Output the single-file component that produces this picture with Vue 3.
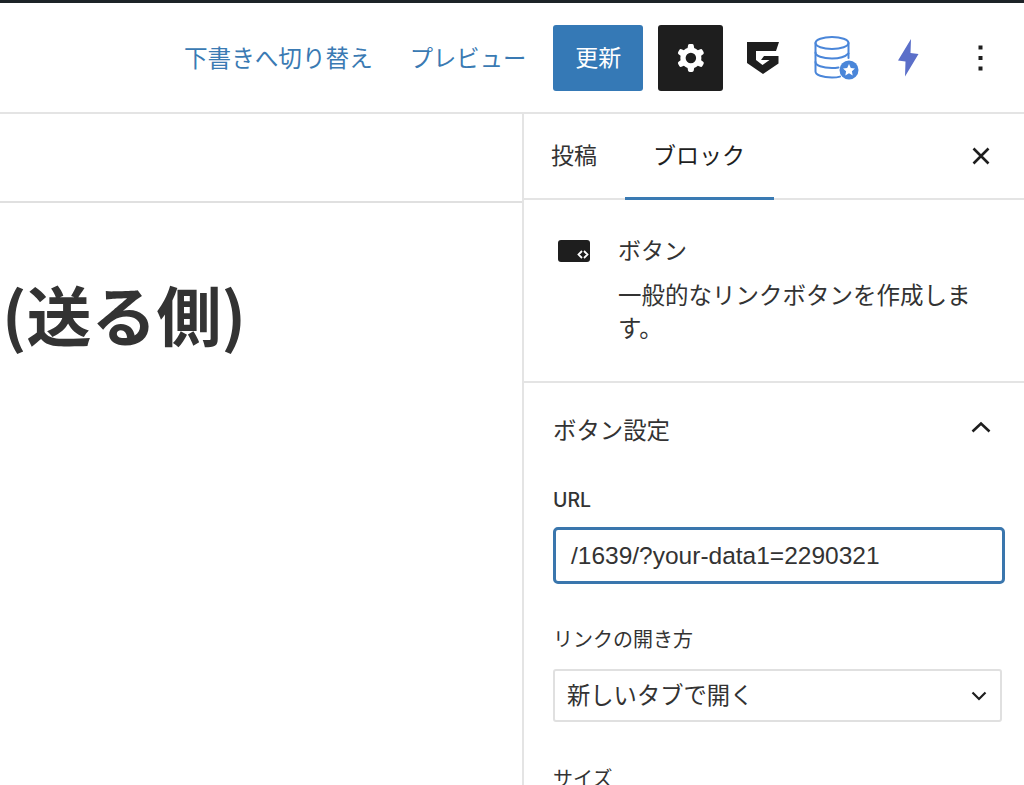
<script setup>
const links = ['下書きへ切り替え', 'プレビュー']
</script>

<template>
  <div class="page">
    <div class="topline"></div>
    <header class="header">
      <a class="link first">{{ links[0] }}</a>
      <a class="link second">{{ links[1] }}</a>
      <button class="update">更新</button>
      <button class="gear" aria-label="設定">
        <svg width="42" height="42" viewBox="0 0 24 24"><path fill="#fff" fill-rule="evenodd" d="M10.289 4.836A1 1 0 0111.275 4h1.306a1 1 0 01.987.836l.244 1.466c.787.26 1.503.679 2.108 1.218l1.393-.522a1 1 0 011.216.437l.653 1.13a1 1 0 01-.23 1.273l-1.148.944a6.025 6.025 0 010 2.435l1.149.946a1 1 0 01.23 1.272l-.653 1.13a1 1 0 01-1.216.437l-1.394-.522c-.605.54-1.32.958-2.108 1.218l-.244 1.466a1 1 0 01-.987.836h-1.306a1 1 0 01-.986-.836l-.244-1.466a5.995 5.995 0 01-2.108-1.218l-1.394.522a1 1 0 01-1.217-.436l-.653-1.131a1 1 0 01.23-1.272l1.149-.946a6.026 6.026 0 010-2.435l-1.148-.944a1 1 0 01-.23-1.272l.653-1.131a1 1 0 011.217-.437l1.393.522a5.994 5.994 0 012.108-1.218l.244-1.466zM14.929 12a3 3 0 11-6 0 3 3 0 016 0z"/></svg>
      </button>
      <svg class="g-icon" width="32" height="32" viewBox="0 0 32 32"><path fill="#1e1e1e" d="M0 0H32L29 9H9V18L15.500 23L22.500 18H14L17 14H31.500V21.500L16 32L0 21Z"/></svg>
      <svg class="db-icon" width="45" height="44" viewBox="0 0 45 44">
        <g fill="none" stroke="#4a86d9" stroke-width="2" stroke-linecap="round">
          <ellipse cx="18" cy="7" rx="16.500" ry="6"/>
          <path d="M1.500 7V35.500C1.500 39 8.500 41.500 18 41.500C21 41.500 24 41.200 26 40.600"/>
          <path d="M34.500 7V22"/>
          <path d="M1.500 16.500C1.500 20 8.500 22.500 18 22.500C24.500 22.500 31 21 34.500 17.500"/>
          <path d="M1.500 26C1.500 29.500 8.500 32 18 32C20.500 32 22.500 31.800 24.500 31.400"/>
        </g>
        <circle cx="35" cy="34" r="9.500" fill="#4a86d9"/>
        <path fill="#fff" d="M35 28L36.800 31.900L41 32.400L37.900 35.200L38.700 39.400L35 37.300L31.300 39.400L32.100 35.200L29 32.400L33.200 31.900Z"/>
      </svg>
      <svg class="bolt" width="22" height="38" viewBox="0 0 22 38"><path fill="#5b6fc9" d="M13 0L0 21.500L7.500 22.500L7 37.500L20.500 15L12.500 14Z"/></svg>
      <svg class="dots" width="6" height="26" viewBox="0 0 6 26"><rect x="0.500" y="0.500" width="4" height="4" fill="#1e1e1e"/><rect x="0.500" y="11" width="4" height="4" fill="#1e1e1e"/><rect x="0.500" y="21.500" width="4" height="4" fill="#1e1e1e"/></svg>
    </header>

    <div class="body">
      <main class="editor">
        <div class="editor-top"></div>
        <h1 class="title">(送る側)</h1>
      </main>

      <aside class="sidebar">
        <div class="tabs">
          <span class="tab tab-post">投稿</span>
          <span class="tab tab-block">ブロック</span>
          <svg class="close" width="20" height="20" viewBox="0 0 20 20"><path d="M2.500 2.500L17.500 17.500M17.500 2.500L2.500 17.500" stroke="#1e1e1e" stroke-width="2.600" fill="none"/></svg>
        </div>

        <section class="card">
          <svg class="block-icon" width="32" height="22" viewBox="0 0 32 22">
            <rect width="32" height="22" rx="3" fill="#1e1e1e"/>
            <path d="M24 11L20.500 14.500L24 18M26 11L29.500 14.500L26 18" fill="none" stroke="#fff" stroke-width="1.800"/>
          </svg>
          <div class="card-text">
            <div class="card-title">ボタン</div>
            <p class="card-desc">一般的なリンクボタンを作成します。</p>
          </div>
        </section>

        <section class="settings">
          <div class="settings-head">
            <span>ボタン設定</span>
            <svg width="20" height="12" viewBox="0 0 20 12"><path d="M1.500 10.500L10 2.500L18.500 10.500" fill="none" stroke="#1e1e1e" stroke-width="2.600"/></svg>
          </div>
          <label class="url-label">URL</label>
          <div class="url-input">/1639/?your-data1=2290321</div>
          <label class="field-label open-label">リンクの開き方</label>
          <div class="select">
            <span>新しいタブで開く</span>
            <svg width="16" height="10" viewBox="0 0 16 10"><path d="M1.500 1.500L8 8L14.500 1.500" fill="none" stroke="#1e1e1e" stroke-width="2.200"/></svg>
          </div>
          <label class="field-label size-label">サイズ</label>
        </section>
      </aside>
    </div>
  </div>
</template>

<style scoped>
.page {
  width: 1024px;
  height: 785px;
  overflow: hidden;
  background: #fff;
  color: #1e1e1e;
  font-family: "Noto Sans CJK JP", "Liberation Sans", sans-serif;
  display: flex;
  flex-direction: column;
}
.topline { height: 3px; background: #1d2327; flex: none; }
.header {
  height: 109px;
  flex: none;
  border-bottom: 2px solid #e4e4e4;
  display: flex;
  align-items: center;
  padding-left: 184px;
  box-sizing: content-box;
}
.link { color: #3a7ab3; font-size: 23.600px; line-height: 32px; white-space: nowrap; margin-top: -2px; }
.second { margin-left: 37px; font-size: 23.300px; }
.update {
  margin-left: 27px;
  width: 90px;
  height: 66px;
  border: 0;
  border-radius: 3px;
  background: #3579b6;
  color: #fff;
  font: inherit;
  font-size: 23px;
  padding: 0 0 3px;
}
.gear {
  margin-left: 15px;
  width: 65px;
  height: 66px;
  border: 0;
  border-radius: 3px;
  background: #1e1e1e;
  padding: 0;
  display: flex;
  align-items: center;
  justify-content: center;
}
.g-icon { margin-left: 24px; flex: none; }
.db-icon { margin-left: 35px; flex: none; }
.bolt { margin-left: 39px; flex: none; }
.dots { margin-left: 58px; flex: none; }

.body { flex: 1; display: flex; min-height: 0; }
.editor { width: 522px; flex: none; }
.editor-top { height: 87px; border-bottom: 2px solid #e0e0e0; }
.title {
  margin: 65px 0 0 0;
  padding-left: 2px;
  font-size: 65px;
  line-height: 90px;
  font-weight: 700;
  color: #333;
  white-space: nowrap;
}
.sidebar { flex: 1; border-left: 2px solid #e4e4e4; }
.tabs {
  height: 80px;
  padding: 0 0 4px 27px;
  border-bottom: 2px solid #e4e4e4;
  display: flex;
  align-items: center;
  position: relative;
}
.tab { font-size: 23px; line-height: 32px; color: #1e1e1e; white-space: nowrap; }
.tab-post { color: #333; }
.tab-block { margin-left: 56px; }
.tab-block::after {
  content: "";
  position: absolute;
  left: 101px;
  width: 149px;
  bottom: -2px;
  height: 3px;
  background: #3a7ab3;
}
.close { position: absolute; right: 34px; top: 32px; }
.card {
  height: 183px;
  border-bottom: 2px solid #e4e4e4;
  box-sizing: border-box;
  display: flex;
  padding: 40px 28px 0 34px;
}
.block-icon { flex: none; }
.card-text { margin-left: 28px; }
.card-title { font-size: 23px; line-height: 22px; color: #333; margin-top: -2px; }
.card-desc { margin: 18px 0 0; font-size: 23.500px; line-height: 33px; color: #333; }
.settings { padding: 0 20px 0 29px; }
.settings-head {
  height: 92px;
  display: flex;
  align-items: center;
  justify-content: space-between;
  font-size: 23.400px;
  color: #333;
  padding-right: 14px;
}
.settings-head svg { margin-top: -4px; }
.url-label {
  display: block;
  margin: 13px 0 0;
  font-family: "Inter", "Liberation Sans", sans-serif;
  font-size: 19.500px;
  line-height: 24px;
  font-weight: 500;
  color: #333;
}
.url-input {
  margin-top: 15px;
  width: 452px;
  height: 57px;
  box-sizing: border-box;
  border: 3px solid #3a76ad;
  border-radius: 5px;
  padding-left: 15px;
  display: flex;
  align-items: center;
  font-family: "Liberation Sans", sans-serif;
  font-size: 24.500px;
  color: #333;
}
.field-label { display: block; font-size: 20px; line-height: 28px; color: #333; }
.open-label { margin-top: 41px; }
.select {
  margin-top: 16px;
  width: 449px;
  height: 53px;
  box-sizing: border-box;
  border: 2px solid #e0e0e0;
  border-radius: 3px;
  padding: 0 13px 3px 12px;
  display: flex;
  align-items: center;
  justify-content: space-between;
  font-size: 23.300px;
  color: #333;
}
.select svg { margin-top: 3px; }
.size-label { margin-top: 42px; }
</style>
